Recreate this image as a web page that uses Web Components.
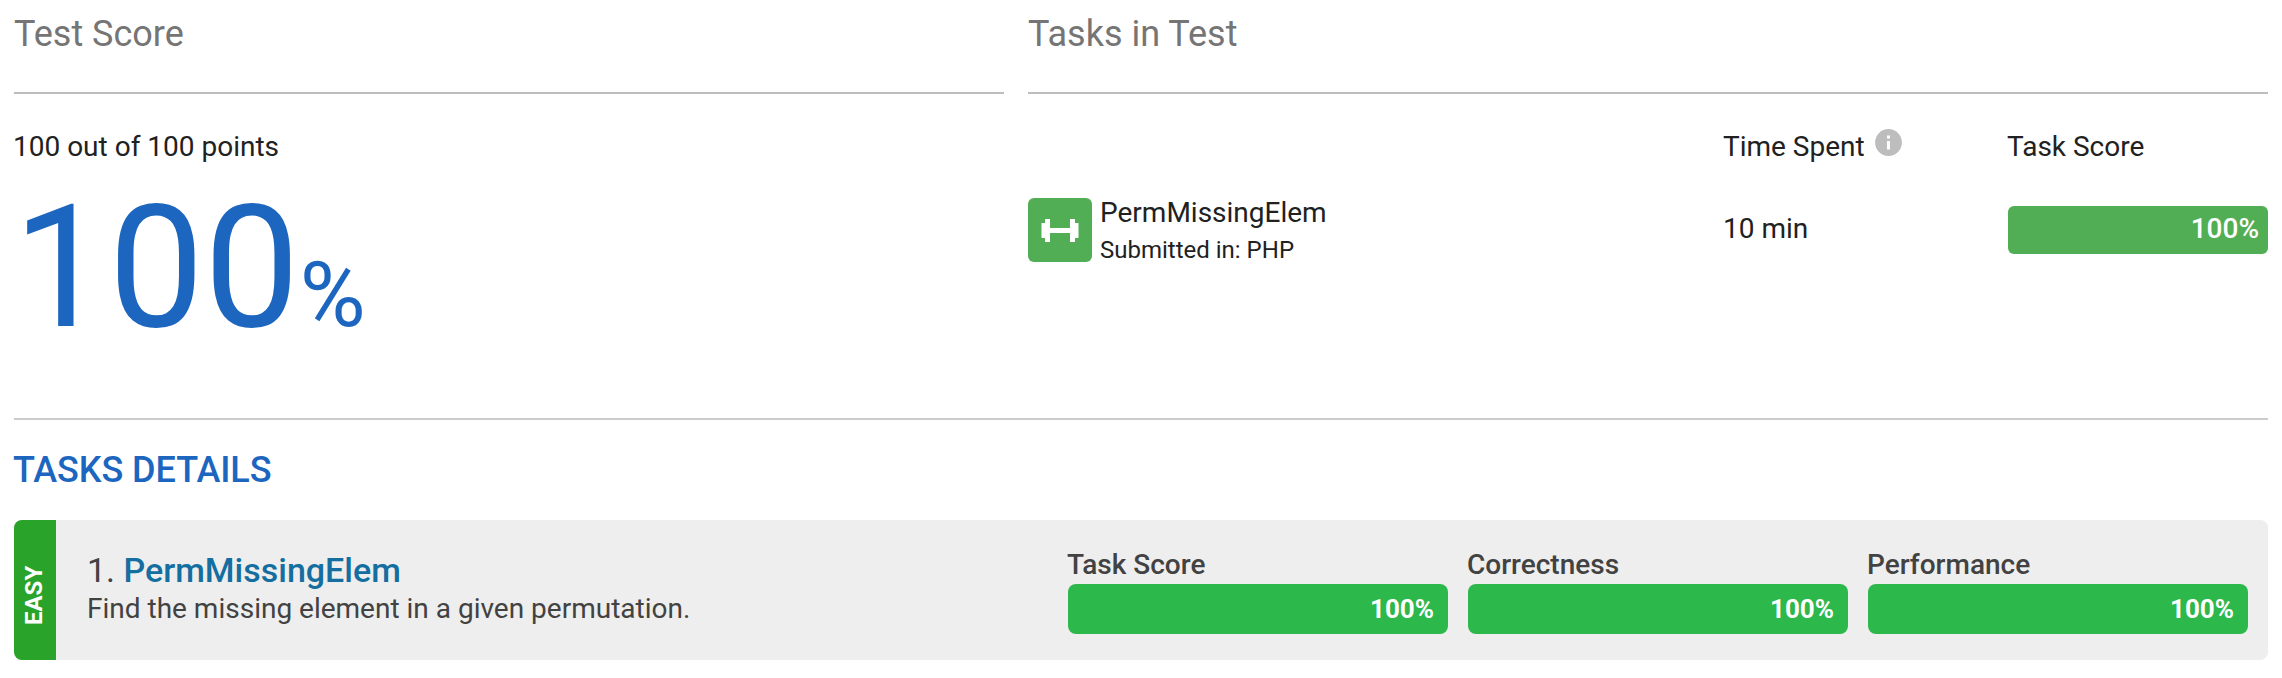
<!DOCTYPE html>
<html lang="en">
<head>
<meta charset="utf-8">
<title>Test report</title>
<style>
  body { margin: 0; background: #fff; font-family: Roboto, "Liberation Sans", sans-serif; color: #212121; }
</style>
</head>
<body>
<test-report></test-report>
<script>
const define = (name, html) => customElements.define(name, class extends HTMLElement {
  constructor() {
    super();
    const t = document.createElement('template');
    t.innerHTML = html;
    this.attachShadow({ mode: 'open' }).append(t.content.cloneNode(true));
  }
});

define('report-panel', `
<style>
  :host { display: block; }
  h2 { margin: 0; height: 94px; padding-top: 13px; box-sizing: border-box; border-bottom: 2px solid #bdbdbd;
       font-size: 36px; line-height: 42px; font-weight: 400; color: #757575; }
</style>
<h2><slot name="title"></slot></h2>
<slot></slot>`);

define('total-score', `
<style>
  :host { display: block; padding-top: 37px; margin-left: -1px; }
  p { margin: 0; font-size: 28px; line-height: 32px; white-space: nowrap; }
  .big { display: flex; align-items: baseline; color: #1d66bf; font-size: 170px; line-height: 180px; margin-top: 15px; }
  .unit { font-size: 90px; line-height: 1; }
</style>
<p><slot></slot></p>
<div class="big"><span><slot name="value"></slot></span><span class="unit">%</span></div>`);

define('info-icon', `
<style>:host { display: block; width: 27px; height: 27px; } svg { display: block; }</style>
<svg width="27" height="27" viewBox="0 0 27 27"><circle cx="13.5" cy="13.5" r="13.4" fill="#bdbdbd"/>
<path fill="#fff" d="M12 6.5h3v3h-3zM12 12h3v8.500h-3z"/></svg>`);

define('dumbbell-icon', `
<style>:host { display: block; width: 64px; height: 64px; border-radius: 6px; background: #51ae55; } svg { display: block; }</style>
<svg width="64" height="64" viewBox="0 0 64 64"><path fill="#fff" d="M13.500 25H17V21h5v9h20v-9h5v4h3.500v15H47v4h-5v-9H22v9h-5v-4h-3.500z"/></svg>`);

define('score-bar', `
<style>
  :host { display: block; box-sizing: border-box; height: 50px; padding-right: 14px; border-radius: 8px; background: #2db84b; color: #fff;
          font-size: 26px; font-weight: 700; line-height: 50px; text-align: right; }
  :host([flat]) { height: 48px; padding-right: 9px; border-radius: 6px; background: #51ae55; font-size: 28px; font-weight: 500; line-height: 45px; }
</style>
<slot></slot>`);

define('task-table', `
<style>
  :host { display: grid; grid-template-columns: 696px 284px 260px; grid-template-rows: 32px 64px; row-gap: 35px; padding-top: 37px;
          font-size: 28px; line-height: 32px; white-space: nowrap; }
  .time { display: flex; gap: 10px; }
  .time, .head, .mins { margin-left: -1px; }
  info-icon { margin-top: -2px; }
  .task { display: flex; gap: 8px; }
  .task .name { line-height: 30px; }
  .task small { display: block; font-size: 24px; line-height: 28px; margin-top: 8px; }
  .mins { line-height: 62px; }
  score-bar { margin-top: 8px; }
</style>
<span></span>
<div class="time"><span>Time Spent</span><info-icon></info-icon></div>
<span class="head">Task Score</span>
<div class="task"><dumbbell-icon></dumbbell-icon><div><div class="name"><slot name="name"></slot></div><small><slot name="language"></slot></small></div></div>
<div class="mins"><slot name="time"></slot></div>
<score-bar flat><slot name="score"></slot></score-bar>`);

define('score-meter', `
<style>
  :host { display: block; width: 380px; }
  div { height: 40px; line-height: 42px; margin-left: -1px; font-size: 28px; font-weight: 500; white-space: nowrap; }
</style>
<div><slot name="label"></slot></div>
<score-bar><slot></slot></score-bar>`);

define('task-card', `
<style>
  :host { display: flex; height: 140px; border-radius: 8px; overflow: hidden; background: #eee; color: #424242; }
  .level { width: 42px; flex: none; display: flex; align-items: center; justify-content: center; background: #29a329; color: #fff;
           writing-mode: vertical-rl; transform: rotate(180deg); font-size: 24px; font-weight: 700; padding: 0 0 10px 2px; box-sizing: border-box; }
  .text { flex: 1; padding: 30px 0 0 31px; white-space: nowrap; }
  h4 { margin: 0; font-size: 34px; line-height: 40px; font-weight: 400; }
  b { font-weight: 500; color: #146ea0; }
  p { margin: 2px 0 0; font-size: 28px; line-height: 34px; }
  .meters { display: flex; gap: 20px; padding: 24px 20px 0 0; }
</style>
<div class="level"><slot name="level"></slot></div>
<div class="text"><h4>1. <b><slot name="name"></slot></b></h4><p><slot name="summary"></slot></p></div>
<div class="meters"><slot></slot></div>`);

define('test-report', `
<style>
  :host { display: block; width: 2254px; height: 678px; padding-left: 14px; }
  .top { display: grid; grid-template-columns: 990px 1240px; gap: 24px; height: 418px; }
  hr { margin: 0; border: 0; height: 2px; background: #ccc; }
  h3 { margin: 29px 0 29px -1px; font-size: 36px; line-height: 42px; font-weight: 500; color: #1d66bf; letter-spacing: -0.06px; }
</style>
<div class="top">
  <report-panel><span slot="title">Test Score</span>
    <total-score>100 out of 100 points<span slot="value">100</span></total-score>
  </report-panel>
  <report-panel><span slot="title">Tasks in Test</span>
    <task-table><span slot="name">PermMissingElem</span><span slot="language">Submitted in: PHP</span><span slot="time">10 min</span><span slot="score">100%</span></task-table>
  </report-panel>
</div>
<hr>
<h3>TASKS DETAILS</h3>
<task-card>
  <span slot="level">EASY</span><span slot="name">PermMissingElem</span><span slot="summary">Find the missing element in a given permutation.</span>
  <score-meter><span slot="label">Task Score</span>100%</score-meter>
  <score-meter><span slot="label">Correctness</span>100%</score-meter>
  <score-meter><span slot="label">Performance</span>100%</score-meter>
</task-card>`);
</script>
</body>
</html>
